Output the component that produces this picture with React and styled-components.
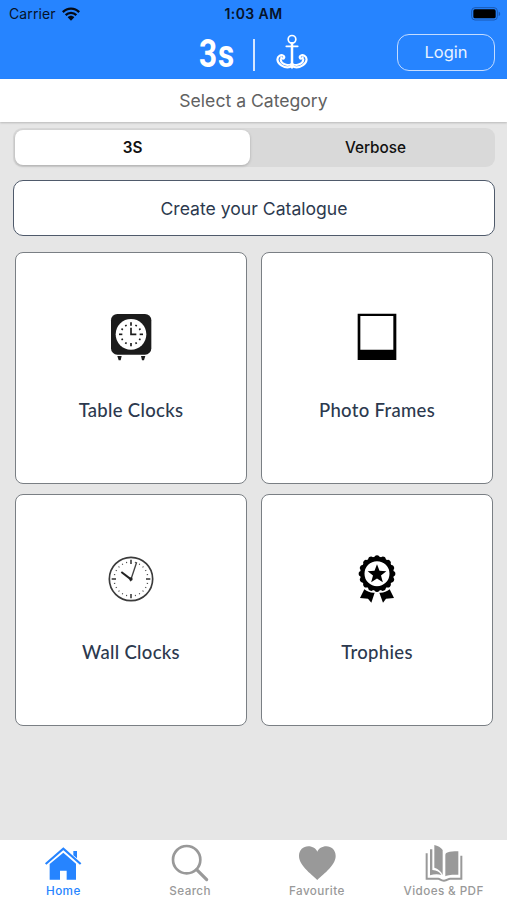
// Libraries
import React, { useState } from 'react';
import styled, { createGlobalStyle } from 'styled-components';

const ticks = (count) =>
  Array.from({ length: count }, (_, i) => (i * 360) / count);

const WifiIcon = () => (
  <svg width="18" height="14" viewBox="0 0 54 42">
    <g fill="none" stroke="#050b16" strokeWidth="7">
      <path d="M2.5 15.500C16 1.500 38 1.500 51.500 15.500" />
      <path d="M11 24.500C20 15.500 34 15.500 43 24.500" />
    </g>
    <path d="M17 31C23 25 31 25 37 31L27 41z" fill="#050b16" />
  </svg>
);

const BatteryIcon = () => (
  <svg width="30" height="14" viewBox="0 0 90 42">
    <rect x="2" y="2" width="77" height="37" rx="10" fill="none" stroke="#1a59b4" strokeWidth="3" />
    <rect x="7" y="7" width="67" height="27" rx="5" fill="#000" />
    <path d="M83 14C89 16 89 25 83 27z" fill="#1a59b4" />
  </svg>
);

const AnchorIcon = () => (
  <svg width="32" height="36" viewBox="0 0 96 108">
    <g fill="none" stroke="#fff" strokeLinecap="round" strokeLinejoin="round">
      <circle cx="48" cy="16" r="11.500" strokeWidth="5" />
      <path d="M31 37H65" strokeWidth="5.500" />
      <path d="M48 28V98" strokeWidth="7.500" />
      <path d="M48 95C40 102 27 101 16 94C2 85 1 71 11 65C19 61 27 66 24 72C22 76 17 73 16 71" strokeWidth="6.500" />
      <path d="M48 95C56 102 69 101 80 94C94 85 95 71 85 65C77 61 69 66 72 72C74 76 79 73 80 71" strokeWidth="6.500" />
      <path d="M14 76C15 90 34 97 46 90M82 76C81 90 62 97 50 90" strokeWidth="6" />
    </g>
    <path d="M40 94L48 106L56 94z" fill="#fff" />
  </svg>
);

const TableClockIcon = () => (
  <svg width="44" height="50" viewBox="0 0 132 150">
    <rect x="6" y="6" width="121" height="122" rx="19" fill="#1b1b1b" />
    <circle cx="66" cy="67" r="46" fill="#fff" />
    {ticks(12).map((angle) => (
      <path
        key={angle}
        d={angle % 90 === 0 ? 'M66 31V41' : 'M66 34V39'}
        stroke="#1b1b1b"
        strokeWidth="5"
        transform={`rotate(${angle} 66 67)`}
      />
    ))}
    <path d="M66 47V67H82" fill="none" stroke="#1b1b1b" strokeWidth="5" />
    <path d="M25 132H38L35 145H29zM96 132H109L105 145H99z" fill="#1b1b1b" />
  </svg>
);

const FrameIcon = () => (
  <svg width="44" height="50" viewBox="0 0 132 150">
    <path d="M8 5H124V144H8zM16 12V113H115V12z" fill="#000" fillRule="evenodd" />
  </svg>
);

const WallClockIcon = () => (
  <svg width="48" height="48" viewBox="0 0 144 144">
    <circle cx="72" cy="72" r="65" fill="#fff" stroke="#3b3b3b" strokeWidth="5" />
    {ticks(24).map((angle) => (
      <path
        key={angle}
        d={angle % 90 === 0 ? 'M72 14V27' : 'M72 19V23'}
        stroke="#444"
        strokeWidth={angle % 90 === 0 ? 5 : 3}
        transform={`rotate(${angle} 72 72)`}
      />
    ))}
    <path d="M43 51L72 73" stroke="#222" strokeWidth="6" />
    <path d="M70 79L89 22" stroke="#444" strokeWidth="4" />
    <circle cx="72" cy="72" r="5" fill="#222" />
  </svg>
);

const TrophyIcon = () => (
  <svg width="40" height="50" viewBox="0 0 120 150">
    <circle cx="60" cy="59" r="44" fill="none" stroke="#000" strokeWidth="13" />
    {ticks(16).map((angle) => (
      <circle key={angle} cx="60" cy="12" r="8" transform={`rotate(${angle} 60 59)`} />
    ))}
    <path d="M60 31L67.500 50.500L88 51.500L72 64.500L77.500 85L60 73.500L42.500 85L48 64.500L32 51.500L52.500 50.500z" />
    <path d="M22 106C32 114 42 117 53 116L43 146L33 134L9 132zM98 106C88 114 78 117 67 116L78 146L87 134L111 132z" />
  </svg>
);

const HomeIcon = () => (
  <svg width="40" height="38" viewBox="0 0 120 114">
    <path d="M8 60L61 14L113 60" fill="none" stroke="currentColor" strokeWidth="6.500" />
    <path d="M91 21H102V43L91 34zM61 26L99 59V107H71V80H51V107H20V60z" fill="currentColor" />
  </svg>
);

const SearchIcon = () => (
  <svg width="40" height="38" viewBox="0 0 120 114">
    <g fill="none" stroke="currentColor" strokeLinecap="round">
      <circle cx="50" cy="47" r="41" strokeWidth="8" />
      <path d="M80 77L110 107" strokeWidth="9.500" />
    </g>
  </svg>
);

const HeartIcon = () => (
  <svg width="40" height="38" viewBox="0 0 120 114">
    <path
      d="M61 108C51 96 6 67 6 36C6 18 19 7 34 7C47 7 57 14 61 23C65 14 75 7 88 7C103 7 116 18 116 36C116 67 71 96 61 108z"
      fill="currentColor"
    />
  </svg>
);

const BookIcon = () => (
  <svg width="40" height="38" viewBox="0 0 120 114">
    <path
      d="M31 3C41 5 51 10 56 18V93C52 82 42 74 31 71zM64 34C64 25 73 22 103 22V92C84 92 72 92 64 97zM18 16H25V78C38 79 48 84 52 93C43 90 30 90 18 94z"
      fill="currentColor"
    />
    <path
      d="M8 28V104H43C47 104 50 110 60 110C70 110 73 104 78 104H112V35"
      fill="none"
      stroke="currentColor"
      strokeWidth="6"
    />
  </svg>
);

const categories = [
  { name: 'Table Clocks', icon: TableClockIcon },
  { name: 'Photo Frames', icon: FrameIcon },
  { name: 'Wall Clocks', icon: WallClockIcon },
  { name: 'Trophies', icon: TrophyIcon },
];

const tabs = [
  { name: 'Home', icon: HomeIcon },
  { name: 'Search', icon: SearchIcon },
  { name: 'Favourite', icon: HeartIcon },
  { name: 'Vidoes & PDF', icon: BookIcon },
];

const App = () => {
  const [brand, setBrand] = useState('3S');
  const [tab, setTab] = useState('Home');

  return (
    <Screen>
      <GlobalStyle />
      <Header>
        <StatusBar>
          <Carrier>
            Carrier <WifiIcon />
          </Carrier>
          <Time>1:03 AM</Time>
          <Battery>
            <BatteryIcon />
          </Battery>
        </StatusBar>
        <NavBar>
          <Brand>
            <BrandName>3s</BrandName>
            <Divider />
            <AnchorIcon />
          </Brand>
          <LoginButton type="button">Login</LoginButton>
        </NavBar>
      </Header>
      <Title>Select a Category</Title>
      <Content>
        <Segments>
          {['3S', 'Verbose'].map((name) => (
            <Segment
              key={name}
              type="button"
              $active={brand === name}
              onClick={() => setBrand(name)}
            >
              {name}
            </Segment>
          ))}
        </Segments>
        <CreateButton type="button">Create your Catalogue</CreateButton>
        <Grid>
          {categories.map(({ name, icon: Icon }) => (
            <Card key={name}>
              <IconBox>
                <Icon />
              </IconBox>
              <CardName>{name}</CardName>
            </Card>
          ))}
        </Grid>
      </Content>
      <TabBar>
        {tabs.map(({ name, icon: Icon }) => (
          <Tab
            key={name}
            type="button"
            $active={tab === name}
            onClick={() => setTab(name)}
          >
            <Icon />
            <TabLabel>{name}</TabLabel>
          </Tab>
        ))}
      </TabBar>
    </Screen>
  );
};

const GlobalStyle = createGlobalStyle`
  * {
    box-sizing: border-box;
  }

  body {
    margin: 0;
  }

  button {
    font-family: inherit;
    margin: 0;
    padding: 0;
    border: 0;
    background: none;
  }

  svg {
    display: block;
    flex-shrink: 0;
  }
`;

const Screen = styled.div`
  display: flex;
  flex-direction: column;
  height: 900px;
  background: #e6e6e6;
  font-family: Inter, 'Liberation Sans', sans-serif;
  overflow: hidden;
`;

const Header = styled.header`
  height: 79px;
  background: #2684ff;
`;

const StatusBar = styled.div`
  display: grid;
  grid-template-columns: 1fr auto 1fr;
  align-items: center;
  height: 27px;
  padding: 0 6px 0 9px;
  color: #061329;
`;

const Carrier = styled.div`
  display: flex;
  align-items: center;
  gap: 6px;
  font-size: 14px;
  letter-spacing: 0.1px;
`;

const Time = styled.div`
  padding-right: 3px;
  font-size: 14px;
  font-weight: 600;
  letter-spacing: 0.4px;
`;

const Battery = styled.div`
  display: flex;
  justify-content: flex-end;
`;

const NavBar = styled.div`
  display: grid;
  grid-template-columns: 1fr auto 1fr;
  align-items: center;
  height: 50px;
  padding-right: 12px;
`;

const Brand = styled.div`
  grid-column: 2;
  display: flex;
  align-items: center;
  padding-left: 12px;
`;

const BrandName = styled.span`
  width: 37px;
  padding-top: 3px;
  color: #fff;
  font-family: Roboto, sans-serif;
  font-size: 38px;
  font-weight: 700;
  line-height: 36px;
  letter-spacing: 1px;
  transform: scaleX(0.83);
  transform-origin: left;
`;

const Divider = styled.span`
  width: 2px;
  height: 32px;
  margin: 5px 21px 0 17px;
  background: #d5e6ff;
`;

const LoginButton = styled.button`
  justify-self: end;
  width: 98px;
  height: 37px;
  border: 1.5px solid #c4dcff;
  border-radius: 12px;
  color: #e9f2ff;
  font-size: 16.5px;
`;

const Title = styled.h1`
  height: 43px;
  margin: 0;
  background: #fff;
  box-shadow: 0 1px 2px rgba(0, 0, 0, 0.2);
  color: #616161;
  font-size: 17.6px;
  font-weight: 400;
  line-height: 43px;
  text-align: center;
`;

const Content = styled.main`
  flex: 1;
  padding: 6px 12px 0 13px;
`;

const Segments = styled.div`
  display: grid;
  grid-template-columns: 235px 235px;
  justify-content: space-between;
  height: 39px;
  padding: 2px;
  border-radius: 9px;
  background: #d9d9d9;
`;

const Segment = styled.button`
  border-radius: 8px;
  background: ${({ $active }) => ($active ? '#fff' : 'transparent')};
  box-shadow: ${({ $active }) =>
    $active ? '0 1px 3px rgba(0, 0, 0, 0.22)' : 'none'};
  color: #111;
  font-size: 15.3px;
  font-weight: ${({ $active }) => ($active ? 600 : 500)};
`;

const CreateButton = styled.button`
  display: block;
  width: 100%;
  height: 56px;
  margin-top: 13px;
  border: 1.5px solid #4f5a6b;
  border-radius: 10px;
  background: #fff;
  color: #2c394e;
  font-size: 17.6px;
`;

const Grid = styled.div`
  display: grid;
  grid-template-columns: 232px 232px;
  gap: 10px 14px;
  padding: 16px 2px 0;
`;

const Card = styled.article`
  display: flex;
  flex-direction: column;
  align-items: center;
  height: 232px;
  padding-top: 58px;
  border: 1px solid #7a7f84;
  border-radius: 8px;
  background: #fff;
`;

const IconBox = styled.div`
  display: flex;
  align-items: center;
  justify-content: center;
  height: 52px;
`;

const CardName = styled.h2`
  margin: 34px 0 0;
  color: #2c394e;
  font-family: Lato, sans-serif;
  font-size: 18.5px;
  font-weight: 500;
  line-height: 26px;
  letter-spacing: 0.3px;
`;

const TabBar = styled.nav`
  display: flex;
  height: 60px;
  background: #fff;
`;

const Tab = styled.button`
  display: flex;
  flex: 1 1 0;
  flex-direction: column;
  align-items: center;
  padding: 4px 0 0;
  color: ${({ $active }) => ($active ? '#2684ff' : '#999')};
`;

const TabLabel = styled.span`
  margin-top: 1px;
  font-size: 11.7px;
  font-weight: 500;
  line-height: 16px;
  letter-spacing: 0.4px;
  white-space: nowrap;
`;

export default App;
